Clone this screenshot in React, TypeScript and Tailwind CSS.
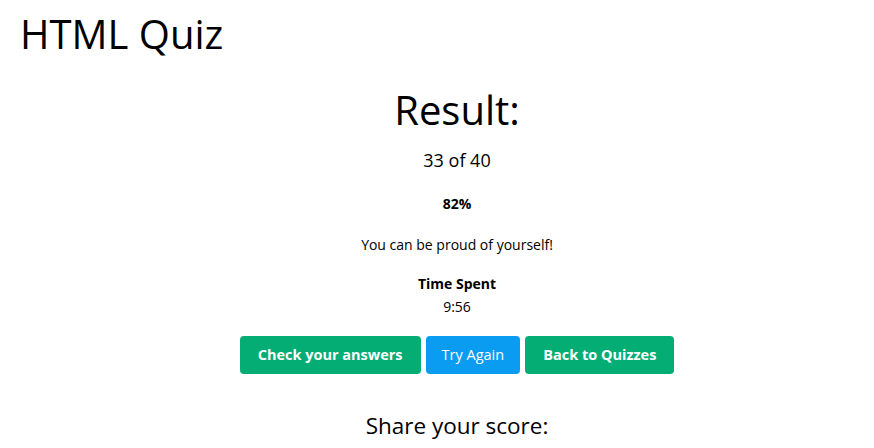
export default function App() {
  return (
    <div className="min-h-screen bg-white text-black font-['Open_Sans','Noto_Sans',sans-serif]">
      <h1 className="px-5 pt-[6px] text-[40px] leading-[56px]">HTML Quiz</h1>
      <div className="flex flex-col items-center pl-[40px] text-center">
        <h2 className="mt-[22px] text-[40px] leading-[52px]">Result:</h2>
        <p className="mt-[11px] text-[18px] leading-[26px]">33 of 40</p>
        <p className="mt-[20px] text-[14px] font-bold leading-[22px]">82%</p>
        <p className="mt-[19px] text-[14px] leading-[22px]">You can be proud of yourself!</p>
        <div className="mt-[16px] text-[14px] leading-[23px]">
          <p className="font-bold">Time Spent</p>
          <p>9:56</p>
        </div>
        <div className="mt-[18px] flex gap-[5px]">
          <button className="h-[38px] rounded-[4px] bg-[#03ad73] px-[18px] text-[14.5px] font-bold text-white">
            Check your answers
          </button>
          <button className="h-[38px] rounded-[4px] bg-[#0a9cf0] px-[16px] text-[14.5px] text-white">
            Try Again
          </button>
          <button className="h-[38px] rounded-[4px] bg-[#03ad73] px-[18px] text-[14.5px] font-bold text-white">
            Back to Quizzes
          </button>
        </div>
        <h3 className="mt-[36px] text-[22.5px] leading-[32px]">Share your score:</h3>
      </div>
    </div>
  );
}
